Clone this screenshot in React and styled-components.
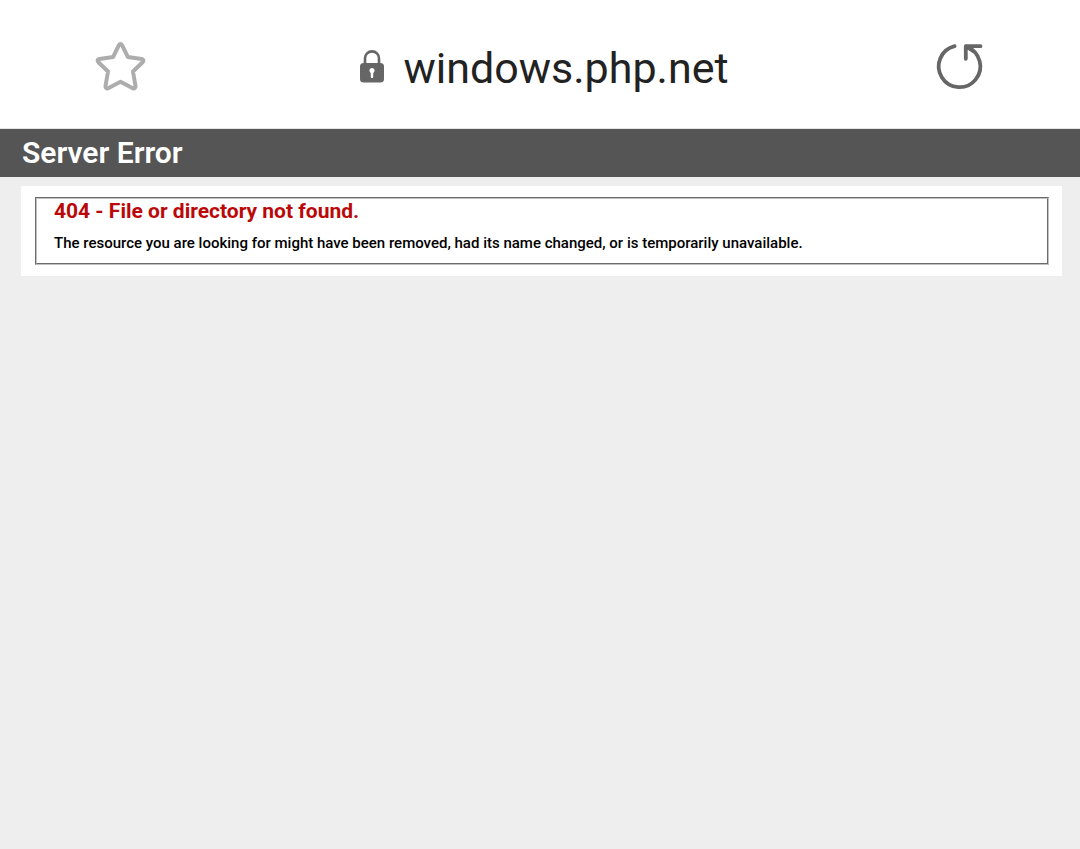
import React from "react";
import styled, { createGlobalStyle } from "styled-components";

const GlobalStyle = createGlobalStyle`
  *, *::before, *::after { box-sizing: border-box; }
  body {
    margin: 0;
    background: #eeeeee;
    font-family: Roboto, "Liberation Sans", sans-serif;
  }
`;

const BrowserBar = styled.header`
  display: grid;
  grid-template-columns: 1fr auto 1fr;
  align-items: center;
  height: 129px;
  padding: 0 92px;
  background: #ffffff;
  border-bottom: 1px solid #e4e4e4;
`;

const IconButton = styled.button`
  display: flex;
  justify-self: ${({ $side }) => $side};
  padding: 0;
  border: 0;
  background: none;
  cursor: pointer;
`;

const Address = styled.div`
  display: flex;
  align-items: center;
  gap: 18px;
  padding: 8px 0 0 8px;
`;

const Host = styled.span`
  color: #222222;
  font-size: 43px;
  line-height: 52px;
`;

const TitleBar = styled.div`
  padding: 6px 22px;
  background: #555555;
`;

const Title = styled.h1`
  margin: 0;
  color: #ffffff;
  font-size: 30px;
  line-height: 36px;
  font-weight: 600;
`;

const Content = styled.main`
  padding: 9px 18px 0 21px;
`;

const Card = styled.div`
  padding: 11px 13px 11px 14px;
  background: #ffffff;
`;

const ErrorBox = styled.section`
  padding: 0 17px 11px;
  border: 2px groove #c0c0c0;
`;

const ErrorHeading = styled.h2`
  margin: 0 0 11px;
  color: #bb0808;
  font-size: 21px;
  line-height: 24px;
  font-weight: 700;
`;

const ErrorText = styled.h3`
  margin: 0;
  color: #000000;
  font-size: 15px;
  line-height: 18px;
  font-weight: 500;
`;

function StarIcon() {
  return (
    <svg width="56" height="56" viewBox="0 0 56 56" fill="none" aria-hidden="true">
      <path
        d="M26.8 9.4Q28.5 6.8 30.2 9.4L35.8 20.9L49.6 23Q52.6 23.8 50.6 26.2L41 35.5L43.5 50Q43.6 53 40.8 52.3L28.5 45.8L16.2 52.3Q13.4 53 13.5 50L16 35.5L6.4 26.2Q4.4 23.8 7.4 23L21.2 20.9Z"
        stroke="#adadad"
        strokeWidth="4"
        strokeLinejoin="round"
      />
    </svg>
  );
}

function LockIcon() {
  return (
    <svg width="26" height="36" viewBox="0 0 26 36" fill="none" aria-hidden="true">
      <path d="M6 15V8.4a7 7 0 0 1 14 0V15" stroke="#666666" strokeWidth="2.6" />
      <rect x="1" y="13" width="24" height="19.5" rx="3.5" fill="#666666" />
      <circle cx="13" cy="20.6" r="2.5" fill="#ffffff" />
      <path d="M13 21.4v5.5" stroke="#ffffff" strokeWidth="2.4" strokeLinecap="round" />
    </svg>
  );
}

function ReloadIcon() {
  return (
    <svg width="56" height="56" viewBox="0 0 56 56" fill="none" aria-hidden="true">
      <g stroke="#666666" strokeWidth="3.8" strokeLinecap="round" strokeLinejoin="round">
        <path d="M22.6 10.2A20.8 20.8 0 1 0 35 11" />
        <path d="M48.5 10.2H33.8V22.8M33.8 10.2L41 14.8" />
      </g>
    </svg>
  );
}

export default function App() {
  return (
    <>
      <GlobalStyle />
      <BrowserBar>
        <IconButton type="button" $side="start" aria-label="Bookmark">
          <StarIcon />
        </IconButton>
        <Address>
          <LockIcon />
          <Host>windows.php.net</Host>
        </Address>
        <IconButton type="button" $side="end" aria-label="Reload">
          <ReloadIcon />
        </IconButton>
      </BrowserBar>
      <TitleBar>
        <Title>Server Error</Title>
      </TitleBar>
      <Content>
        <Card>
          <ErrorBox>
            <ErrorHeading>404 - File or directory not found.</ErrorHeading>
            <ErrorText>
              The resource you are looking for might have been removed, had its
              name changed, or is temporarily unavailable.
            </ErrorText>
          </ErrorBox>
        </Card>
      </Content>
    </>
  );
}
